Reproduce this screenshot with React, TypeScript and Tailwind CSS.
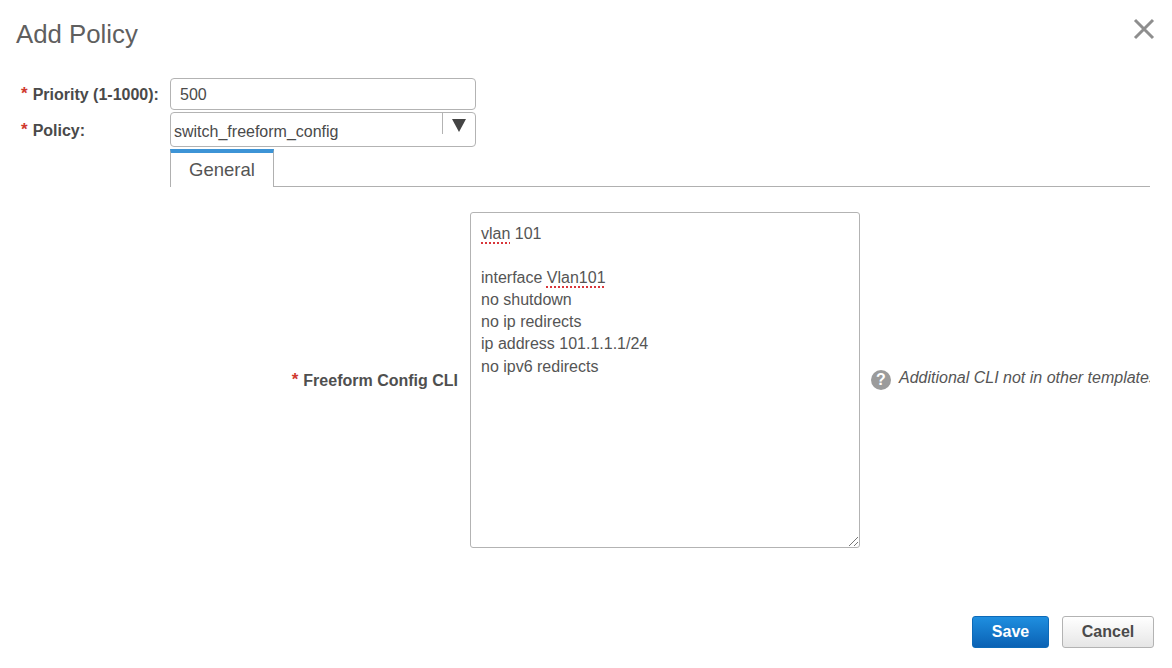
import React from "react";

function Req() {
  return <span className="text-[#d0392f] font-bold text-[17px] leading-none relative top-[-2px]">*</span>;
}

const sq = "underline decoration-dotted decoration-[#d9363a] decoration-2 underline-offset-[3px]";

export default function App() {
  return (
    <div className="w-[1172px] h-[668px] bg-white overflow-hidden flex flex-col text-[#4a4a4a] font-['Liberation_Sans',Arial,sans-serif]">
      <div className="h-[78px] flex justify-between items-start pl-4 pr-[16px]">
        <h1 className="text-[25.8px] leading-[30px] mt-[19px] text-[#5f5f5f] font-normal">Add Policy</h1>
        <svg width="24" height="24" viewBox="0 0 24 24" className="mt-[17px]">
          <path d="M3 3 L21 21 M21 3 L3 21" stroke="#8e8e8e" strokeWidth="3" fill="none" />
        </svg>
      </div>

      <div className="flex flex-col pl-[21px]">
        <div className="flex items-center h-[32px]">
          <label className="w-[149px] text-[16px] font-bold text-[#4a4a4a] flex items-center gap-[5px] pt-[2px]">
            <Req />
            <span>Priority (1-1000):</span>
          </label>
          <div className="w-[306px] h-[32px] border border-[#b3b3b3] rounded-[4px] flex items-center pl-[9px] text-[16px] text-[#4a4a4a] pt-[2px]">500</div>
        </div>
        <div className="flex items-center h-[35px] mt-[2px]">
          <label className="w-[149px] text-[16px] font-bold text-[#4a4a4a] flex items-center gap-[5px] pt-[3px]">
            <Req />
            <span>Policy:</span>
          </label>
          <div className="w-[306px] h-[35px] border border-[#b3b3b3] rounded-[4px] flex justify-between pl-[3px] text-[16px] text-[#4a4a4a]">
            <span className="self-end pb-[5px] leading-[18px]">switch_freeform_config</span>
            <div className="w-[33px] h-[21px] border-l border-[#b3b3b3] flex items-start justify-center pt-[6px]">
              <svg width="14" height="13" viewBox="0 0 14 13">
                <path d="M0 0 H14 L7 13 Z" fill="#444" />
              </svg>
            </div>
          </div>
        </div>
      </div>

      <div className="flex ml-[170px] mt-[2px] mr-[22px] h-[38px]">
        <div className="w-[104px] h-[38px] border-t-[4px] border-t-[#3d94d6] border-l border-r border-[#b0b0b0] flex items-center justify-center text-[18.5px] text-[#555] bg-white">
          General
        </div>
        <div className="flex-1 border-b border-[#b0b0b0]"></div>
      </div>

      <div className="flex mt-[25px] h-[336px]">
        <div className="w-[458px] flex items-center justify-end gap-[5px] text-[16px] font-bold text-[#4f4f4f] pt-[2px]">
          <Req />
          <span>Freeform Config CLI</span>
        </div>
        <div className="relative w-[390px] h-[336px] ml-[12px] border border-[#b3b3b3] rounded-[3px] pl-[10px] pt-[10px] text-[16px] leading-[22px] text-[#555]">
          <div><span className={sq}>vlan</span> 101</div>
          <div className="h-[22px]"></div>
          <div>interface <span className={sq}>Vlan101</span></div>
          <div>no shutdown</div>
          <div>no ip redirects</div>
          <div>ip address 101.1.1.1/24</div>
          <div className="pt-[1px]">no ipv6 redirects</div>
          <svg width="11" height="11" viewBox="0 0 11 11" className="absolute right-[0px] bottom-[0px]">
            <path d="M1 10 L10 1 M6 10 L10 6" stroke="#777" strokeWidth="1" fill="none" />
          </svg>
        </div>
        <div className="w-[279px] ml-[11px] flex items-center gap-[8px] overflow-hidden h-[336px] pb-[4px]">
          <span className="shrink-0 w-[20px] h-[20px] mt-[4px] rounded-full bg-[#9b9b9b] text-white text-[16px] font-bold flex items-center justify-center">?</span>
          <span className="italic text-[16px] text-[#555] whitespace-nowrap">Additional CLI not in other templates</span>
        </div>
      </div>

      <div className="flex justify-end mt-[68px] pr-[18px] gap-[13px]">
        <button className="w-[77px] h-[32px] rounded-[3px] bg-gradient-to-b from-[#1f8fe0] to-[#0b62b4] border border-[#0d6ab8] text-white font-bold text-[16px]">Save</button>
        <button className="w-[92px] h-[32px] rounded-[3px] bg-gradient-to-b from-white to-[#e6e6e6] border border-[#b3b3b3] text-[#4a4a4a] font-bold text-[16px]">Cancel</button>
      </div>
    </div>
  );
}
